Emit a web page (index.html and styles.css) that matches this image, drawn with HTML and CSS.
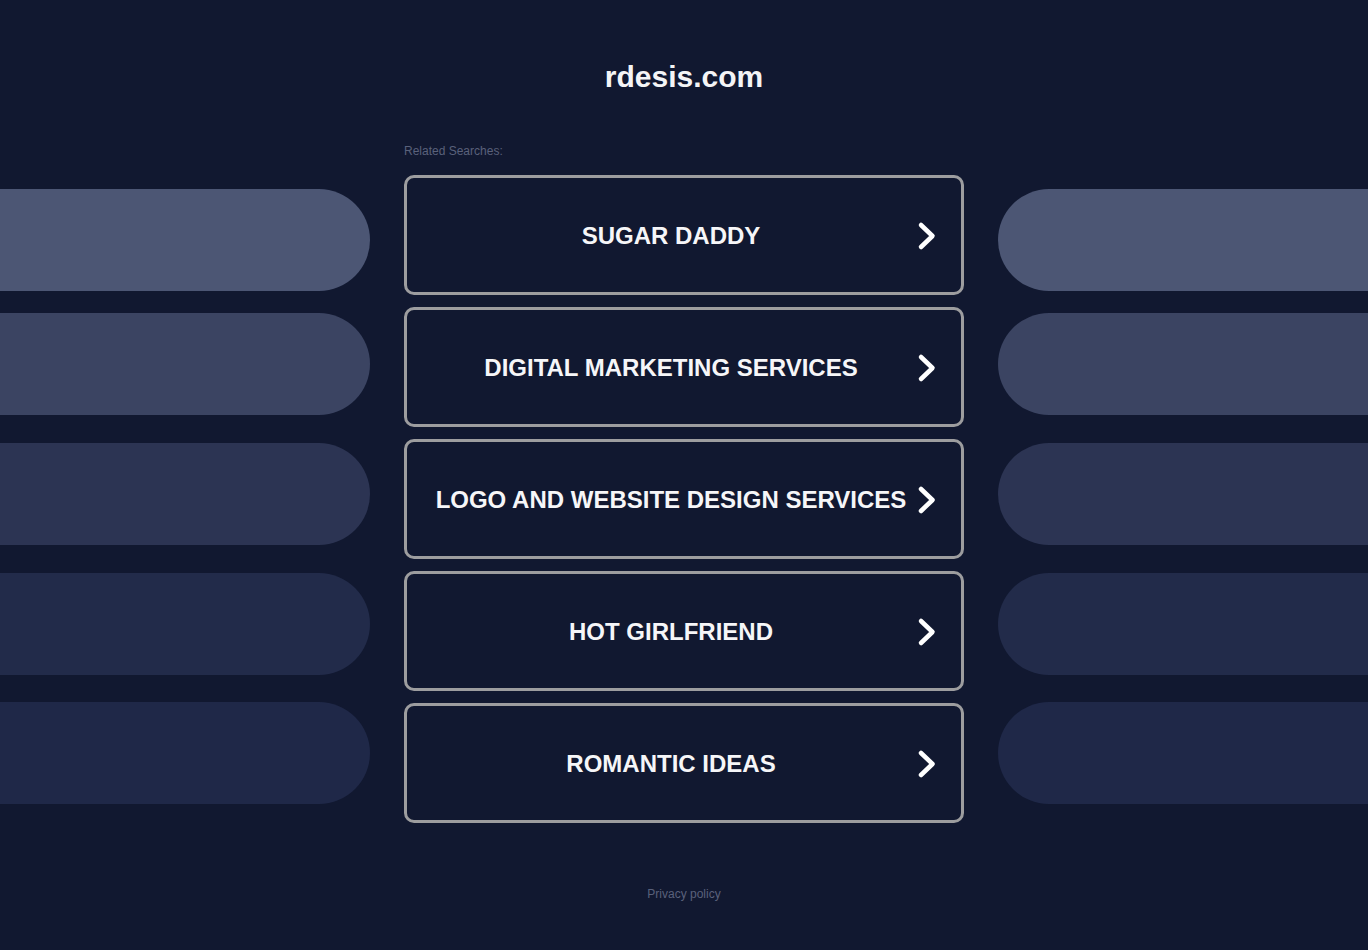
FILE: index.html
```html
<!DOCTYPE html>
<html lang="en">
<head>
    <meta charset="UTF-8">
    <meta name="viewport" content="width=device-width, initial-scale=1.0">
    <title>rdesis.com</title>
    <link rel="stylesheet" href="styles.css">
</head>
<body>
    <div class="page">
        <div class="pilares pilares-esq">
            <div class="pilula p1"></div>
            <div class="pilula p2"></div>
            <div class="pilula p3"></div>
            <div class="pilula p4"></div>
            <div class="pilula p5"></div>
        </div>

        <div class="centro">
            <h1>rdesis.com</h1>
            <p class="relacionadas">Related Searches:</p>

            <div class="links">
                <a class="link" href="#">
                    <span class="texto">SUGAR DADDY</span>
                    <svg class="seta" width="20" height="30" viewBox="0 0 20 30"><polyline points="4,4 15.5,15 4,26"/></svg>
                </a>
                <a class="link" href="#">
                    <span class="texto">DIGITAL MARKETING SERVICES</span>
                    <svg class="seta" width="20" height="30" viewBox="0 0 20 30"><polyline points="4,4 15.5,15 4,26"/></svg>
                </a>
                <a class="link" href="#">
                    <span class="texto">LOGO AND WEBSITE DESIGN SERVICES</span>
                    <svg class="seta" width="20" height="30" viewBox="0 0 20 30"><polyline points="4,4 15.5,15 4,26"/></svg>
                </a>
                <a class="link" href="#">
                    <span class="texto">HOT GIRLFRIEND</span>
                    <svg class="seta" width="20" height="30" viewBox="0 0 20 30"><polyline points="4,4 15.5,15 4,26"/></svg>
                </a>
                <a class="link" href="#">
                    <span class="texto">ROMANTIC IDEAS</span>
                    <svg class="seta" width="20" height="30" viewBox="0 0 20 30"><polyline points="4,4 15.5,15 4,26"/></svg>
                </a>
            </div>

            <a class="privacidade" href="#">Privacy policy</a>
        </div>

        <div class="pilares pilares-dir">
            <div class="pilula p1"></div>
            <div class="pilula p2"></div>
            <div class="pilula p3"></div>
            <div class="pilula p4"></div>
            <div class="pilula p5"></div>
        </div>
    </div>
</body>
</html>
```

FILE: styles.css
```css
body {
    margin: 0;
    background-color: #111830;
    font-family: 'Liberation Sans', Arial, sans-serif;
    color: #fff;
}

.page {
    display: grid;
    grid-template-columns: 1fr 560px 1fr;
    column-gap: 34px;
    height: 950px;
    overflow: hidden;
}

.pilares {
    display: flex;
    flex-direction: column;
    padding-top: 189px;
}

.pilula {
    height: 102px;
    background-color: #4c5674;
}

.pilares-esq .pilula {
    border-radius: 0 51px 51px 0;
}

.pilares-dir .pilula {
    border-radius: 51px 0 0 51px;
}

.pilula.p2 { margin-top: 22px; background-color: #3b4462; }
.pilula.p3 { margin-top: 28px; background-color: #2c3453; }
.pilula.p4 { margin-top: 28px; background-color: #222b4a; }
.pilula.p5 { margin-top: 27px; background-color: #1f2848; }

.centro {
    display: flex;
    flex-direction: column;
}

h1 {
    margin: 59px 0 0 0;
    font-size: 30px;
    line-height: 36px;
    font-weight: bold;
    text-align: center;
    color: #f4f4f6;
}

.relacionadas {
    margin: 48px 0 0 0;
    font-size: 12px;
    line-height: 16px;
    color: #5a617b;
}

.links {
    display: flex;
    flex-direction: column;
    gap: 12px;
    margin-top: 16px;
}

.link {
    display: flex;
    align-items: center;
    height: 120px;
    box-sizing: border-box;
    border: 3px solid #9d9d9f;
    border-radius: 10px;
    padding: 2px 24px 0 18px;
    text-decoration: none;
    color: #f6f6f8;
}

.link .texto {
    flex: 1;
    text-align: center;
    font-size: 24px;
    font-weight: bold;
    white-space: nowrap;
}

.seta {
    flex-shrink: 0;
}

.seta polyline {
    fill: none;
    stroke: #fff;
    stroke-width: 4.5;
    stroke-linecap: round;
    stroke-linejoin: round;
}

.privacidade {
    margin-top: 63px;
    align-self: center;
    font-size: 12px;
    line-height: 16px;
    color: #5a617b;
    text-decoration: none;
}
```
